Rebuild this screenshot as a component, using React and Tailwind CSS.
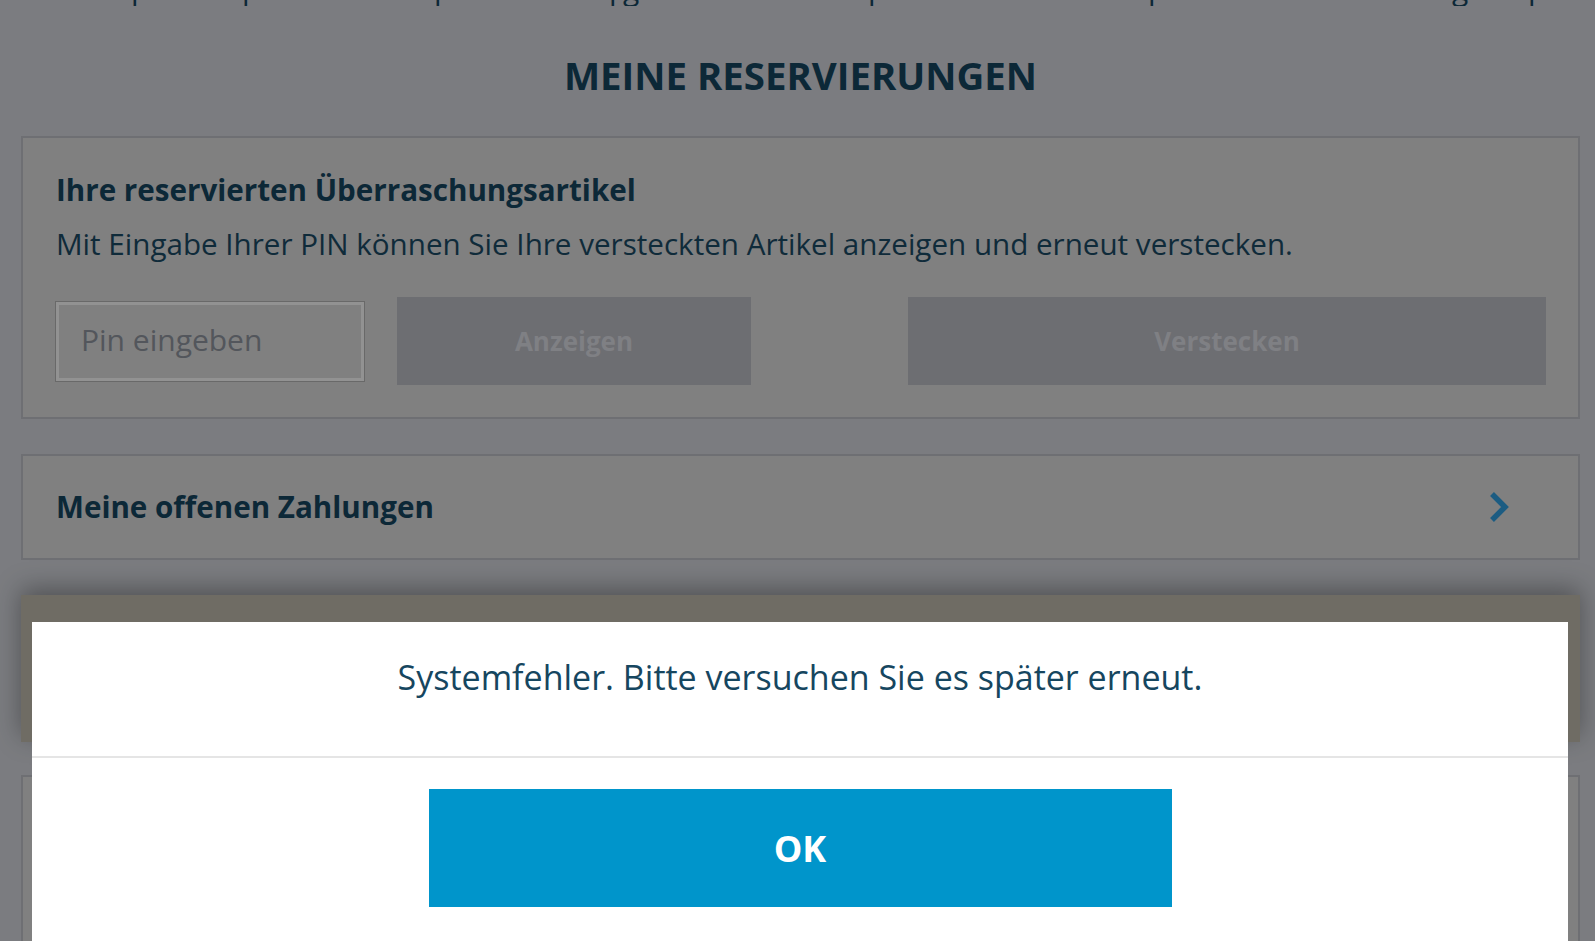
const marks = [
    ['ml-[131px]', 'p'],
    ['ml-[111px]', 'p'],
    ['ml-[192px]', 'p'],
    ['ml-[175px]', 'p'],
    ['ml-[14px]', 'g'],
    ['ml-[245px]', 'p'],
    ['ml-[280px]', 'p'],
    ['ml-[304px]', 'g'],
    ['ml-[76px]', 'p'],
];

function ChevronRight() {
    return (
        <svg width="22" height="32" viewBox="0 0 22 32" fill="none">
            <polyline points="4,3 17,16 4,29" stroke="#3099d9" strokeWidth="5.5" />
        </svg>
    );
}

export default function App() {
    return (
        <div className="relative h-[941px] overflow-hidden bg-[#cdcfd5] font-['Open_Sans',sans-serif] text-[#14435d]">
            {/* line of text scrolled off the top */}
            <div className="h-[6px] overflow-hidden">
                <div className="-mt-[26px] flex text-[30px] leading-none">
                    {marks.map(([ml, ch], i) => (
                        <span key={i} className={`${ml} w-0 overflow-visible`}>
                            {ch}
                        </span>
                    ))}
                </div>
            </div>

            <h1 className="pt-[48px] pb-[40px] pl-[6px] text-center text-[38.4px] font-bold leading-[42px]">
                MEINE RESERVIERUNGEN
            </h1>

            <div className="ml-[21px] w-[1559px]">
                {/* Reserved surprise items */}
                <section className="border-2 border-[#b7b9c0] bg-[#d5d5d5] pt-[33px] pr-[32px] pb-[32px] pl-[33px]">
                    <h2 className="text-[29.6px] font-bold leading-[38px]">
                        Ihre reservierten Überraschungsartikel
                    </h2>
                    <p className="mt-[16px] text-[29.6px] leading-[38px] text-[#1a4862]">
                        Mit Eingabe Ihrer PIN können Sie Ihre versteckten Artikel anzeigen und erneut verstecken.
                    </p>
                    <div className="mt-[34px] flex items-center">
                        <input
                            placeholder="Pin eingeben"
                            className="h-[79px] w-[308px] border-[3px] border-[#f4f4f4] bg-transparent px-[22px] pb-[4px] text-[30px] shadow-[0_0_0_1px_#b0b0b0] outline-none placeholder:text-[#8a9099]"
                        />
                        <button className="ml-[33px] h-[88px] w-[354px] bg-[#b6b7be] text-[26px] font-bold text-[#d4d5dc]">
                            Anzeigen
                        </button>
                        <button className="ml-[157px] h-[88px] w-[638px] bg-[#b6b7be] text-[26px] font-bold text-[#d4d5dc]">
                            Verstecken
                        </button>
                    </div>
                </section>

                {/* Open payments */}
                <section className="mt-[35px] flex h-[106px] items-center justify-between border-2 border-[#b7b9c0] bg-[#d5d5d5] pr-[68px] pl-[33px]">
                    <h2 className="text-[29.6px] font-bold leading-[38px]">Meine offenen Zahlungen</h2>
                    <ChevronRight />
                </section>

                <section className="mt-[35px] h-[147px] bg-[#b9b4a7] shadow-[0_-6px_24px_rgba(0,0,0,0.35)]" />

                <section className="mt-[33px] h-[220px] border-2 border-[#b7b9c0] bg-[#d5d5d5]" />
            </div>

            {/* Dialog */}
            <div className="fixed inset-0 bg-black/40" />
            <div className="fixed inset-0 pt-[622px] pl-[32px]">
                <div className="w-[1536px] bg-white">
                    <p className="pt-[32px] pb-[56px] text-center text-[34px] leading-[46px] text-[#16465f]">
                        Systemfehler. Bitte versuchen Sie es später erneut.
                    </p>
                    <div className="flex justify-center border-t-2 border-[#e5e5e5] pt-[31px] pb-[40px]">
                        <button className="h-[118px] w-[743px] bg-[#0095cb] pt-[2px] text-[36px] font-bold text-white">
                            OK
                        </button>
                    </div>
                </div>
            </div>
        </div>
    );
}
